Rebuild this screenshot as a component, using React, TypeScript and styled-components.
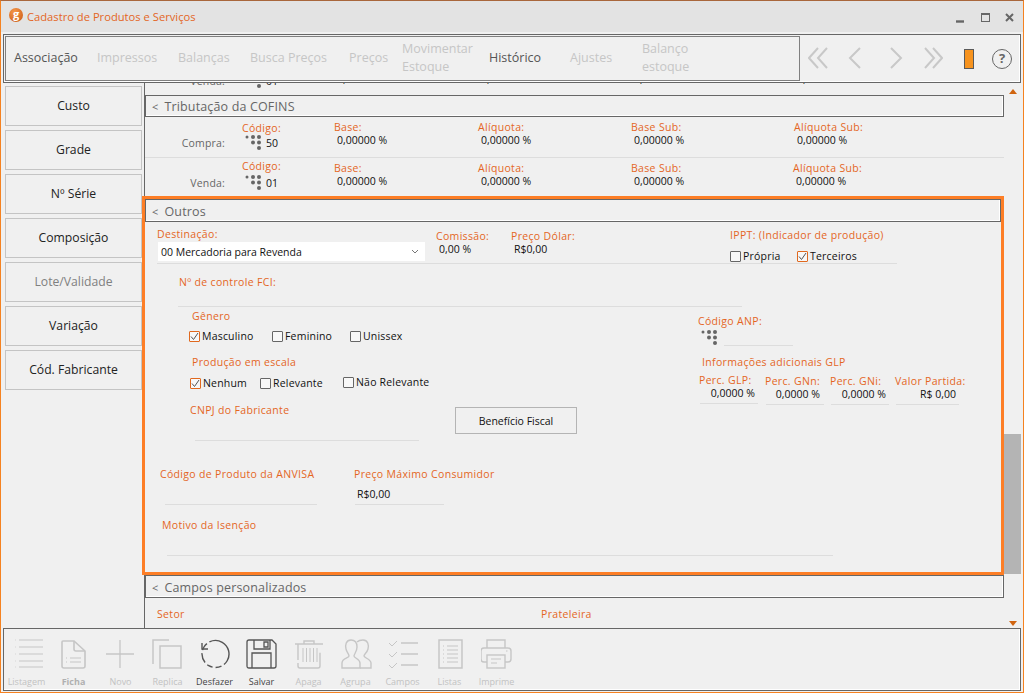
import styled, { createGlobalStyle } from 'styled-components'

const ORANGE = '#e4661f'
const FONT = '"Open Sans", "Noto Sans", sans-serif'

const GlobalStyle = createGlobalStyle`
  html, body {
    margin: 0;
    width: 1024px;
    height: 693px;
    overflow: hidden;
    background: #f0f0f0;
  }
`

const KeypadIcon = () => (
  <Keypad viewBox="0 0 16 15">
    <circle cx="2" cy="2" r="1.5" />
    <circle cx="8" cy="2" r="2" />
    <circle cx="14" cy="2" r="2" />
    <circle cx="8" cy="7.5" r="2" />
    <circle cx="14" cy="7.5" r="2" />
    <circle cx="14" cy="13" r="2" />
  </Keypad>
)

const CheckBox = ({ checked, label, x, lift }: { checked?: boolean; label: string; x: number; lift?: number }) => (
  <Check $x={x} $lift={lift || 0}>
    <CheckSquare $checked={checked}>
      {checked && (
        <svg width="9" height="9" viewBox="0 0 9 9">
          <path d="M1 4.5 L3.5 7.5 L8 1" fill="none" stroke="#555" strokeWidth="1" />
        </svg>
      )}
    </CheckSquare>
    {label}
  </Check>
)

const SectionHeader = ({ title, tall }: { title: string; tall?: boolean }) => (
  <Header $tall={tall}>
    <HeaderCaret>&lt;</HeaderCaret>
    {title}
  </Header>
)

const TaxRow = ({
  title,
  code,
  titleTop,
  codeTop,
  codeGap,
  subNudge,
  height,
  divider,
}: {
  title: string
  code: string
  titleTop: number
  codeTop: number
  codeGap: number
  subNudge: number
  height: number
  divider?: boolean
}) => (
  <TaxLine $height={height} $divider={divider}>
    <TaxTitle $top={titleTop}>{title}</TaxTitle>
    <TaxCell $width={92} $top={codeTop}>
      <Label>Código:</Label>
      <CodeValue $gap={codeGap}>
        <KeypadIcon />
        <Value>{code}</Value>
      </CodeValue>
    </TaxCell>
    <TaxCell $width={144} $top={3}>
      <Label>Base:</Label>
      <TaxValue>0,00000 %</TaxValue>
    </TaxCell>
    <TaxCell $width={153} $top={3}>
      <Label>Alíquota:</Label>
      <TaxValue>0,00000 %</TaxValue>
    </TaxCell>
    <TaxCell $width={163 + subNudge} $top={3}>
      <Label>Base Sub:</Label>
      <TaxValue>0,00000 %</TaxValue>
    </TaxCell>
    <TaxCell $width={120} $top={3}>
      <Label>Alíquota Sub:</Label>
      <TaxValue>0,00000 %</TaxValue>
    </TaxCell>
  </TaxLine>
)

const navTabs = [
  { label: 'Associação', width: 83, active: true },
  { label: 'Impressos', width: 81 },
  { label: 'Balanças', width: 72 },
  { label: 'Busca Preços', width: 99 },
  { label: 'Preços', width: 53 },
  { label: 'Movimentar Estoque', width: 87 },
  { label: 'Histórico', width: 81, active: true },
  { label: 'Ajustes', width: 72 },
  { label: 'Balanço estoque', width: 60 },
]

const sideButtons = [
  { label: 'Custo' },
  { label: 'Grade' },
  { label: 'Nº Série' },
  { label: 'Composição' },
  { label: 'Lote/Validade', muted: true },
  { label: 'Variação' },
  { label: 'Cód. Fabricante' },
]

const glpFields = [
  { label: 'Perc. GLP:', value: '0,0000 %', width: 66, lineWidth: 58, top: 0, right: 10 },
  { label: 'Perc. GNn:', value: '0,0000 %', width: 65, lineWidth: 58, top: 1, right: 10 },
  { label: 'Perc. GNi:', value: '0,0000 %', width: 65, lineWidth: 58, top: 1, right: 9 },
  { label: 'Valor Partida:', value: 'R$ 0,00', width: 66, lineWidth: 63, top: 1, right: 5 },
]

const DIM = '#c6c6c6'
const DARK = '#555'

const toolbarItems = [
  {
    label: 'Listagem',
    color: DIM,
    icon: (
      <>
        <path d="M8 2H32M8 9H32M8 16H32M8 23H32M8 29H32" />
        <path d="M4 2H4.6M4 9H4.6M4 16H4.6M4 23H4.6M4 29H4.6" />
      </>
    ),
  },
  {
    label: 'Ficha',
    strong: true,
    color: DIM,
    icon: (
      <>
        <path d="M4 4 Q4 3 5 3H16L27 13V28Q27 30 25 30H6Q4 30 4 28Z" strokeWidth="1.6" />
        <path d="M16 3V11Q16 13 18 13H27" strokeWidth="1.6" />
        <path d="M12 20H23M12 24H23M8 20H9M8 24H9" />
      </>
    ),
  },
  {
    label: 'Novo',
    color: DIM,
    icon: <path d="M15 2V30M1 16H29" strokeWidth="1.3" />,
  },
  {
    label: 'Replica',
    color: DIM,
    icon: (
      <>
        <path d="M1 26V2H17" strokeWidth="1.5" />
        <rect x="8" y="8" width="21" height="22" strokeWidth="1.5" />
      </>
    ),
  },
  {
    label: 'Desfazer',
    color: DARK,
    icon: (
      <>
        <circle cx="16.5" cy="16" r="13.5" strokeWidth="1.4" strokeDasharray="26 3 6 3 6 3 10 3 8 3" transform="rotate(-60 16.5 16)" />
        <path d="M3 5V11H9" strokeWidth="1.4" />
      </>
    ),
  },
  {
    label: 'Salvar',
    color: DARK,
    icon: (
      <>
        <path d="M3 2H26L30 6V28Q30 30 28 30H3Q1 30 1 28V4Q1 2 3 2Z" strokeWidth="1.3" />
        <path d="M6 30V15H25V30M8 2V11H24V2M18 4H22V9H18Z" strokeWidth="1.3" />
      </>
    ),
  },
  {
    label: 'Apaga',
    color: DIM,
    icon: (
      <>
        <path d="M2 6H30M11 6V3H21V6" strokeWidth="1.4" />
        <path d="M5 6V28Q5 30 7 30H25Q27 30 27 28V6" strokeWidth="1.4" strokeDasharray="16 3 40" />
        <path d="M10 10V24M13.5 10V24M17 10V24M20.5 10V24M24 10V24" />
      </>
    ),
  },
  {
    label: 'Agrupa',
    color: DIM,
    icon: (
      <>
        <path d="M11 2C6 2 5 7 6 11C7 15 9 16 9 18C9 20 2 20 2 25V30H20V25C20 21 14 20 14 18C14 16 17 14 17 9C17 5 15 2 11 2Z" strokeWidth="1.4" />
        <path d="M17 4C19 2 21 2 23 2C28 2 29 7 28 11C27 15 24 16 24 18C24 20 31 21 31 25V30H20" strokeWidth="1.4" />
      </>
    ),
  },
  {
    label: 'Campos',
    color: DIM,
    icon: (
      <>
        <path d="M2 5L5 8L10 3M2 16L5 19L10 14M2 27L5 30L10 25" />
        <path d="M14 5H31M14 16H31M14 27H31" strokeWidth="1.3" />
      </>
    ),
  },
  {
    label: 'Listas',
    color: DIM,
    icon: (
      <>
        <rect x="5" y="2" width="23" height="28" strokeWidth="1.5" />
        <path d="M13 8H24M13 12H24M13 16H24M13 20H24M13 24H24M9 8H10M9 12H10M9 16H10M9 20H10M9 24H10" />
      </>
    ),
  },
  {
    label: 'Imprime',
    color: DIM,
    icon: (
      <>
        <path d="M6 10V2H24V10" strokeWidth="1.4" />
        <path d="M6 24H3Q0 24 0 21V13Q0 10 3 10H27Q30 10 30 13V21Q30 24 27 24H24" strokeWidth="1.4" />
        <rect x="6" y="17" width="18" height="13" strokeWidth="1.4" />
        <path d="M10 21H20M10 25H16M25 13H26.5" />
      </>
    ),
  },
]

const App = () => (
  <Window>
    <GlobalStyle />
    <TitleBar>
      <Logo>g</Logo>
      <WindowTitle>Cadastro de Produtos e Serviços</WindowTitle>
      <WindowControls>
        <svg width="59" height="14" viewBox="0 0 59 14" fill="none" stroke="#666">
          <path d="M0 9.5H8" strokeWidth="2.4" />
          <rect x="25.5" y="1.5" width="8" height="8" />
          <path d="M25 2H34" strokeWidth="2" />
          <path d="M50 2L57 9M57 2L50 9" strokeWidth="2" />
        </svg>
      </WindowControls>
    </TitleBar>

    <NavBar>
      <NavTabs>
        {navTabs.map((tab) => (
          <NavTab key={tab.label} $width={tab.width} $active={tab.active}>
            {tab.label}
          </NavTab>
        ))}
      </NavTabs>
      <NavIcon $ml={8} width="20" height="22" viewBox="0 0 20 22">
        <path d="M10 1L1 11L10 21M19 1L10 11L19 21" />
      </NavIcon>
      <NavIcon $ml={20} width="14" height="22" viewBox="0 0 14 22">
        <path d="M12 1L2 11L12 21" />
      </NavIcon>
      <NavIcon $ml={27} width="14" height="22" viewBox="0 0 14 22">
        <path d="M2 1L12 11L2 21" />
      </NavIcon>
      <NavIcon $ml={21} width="19" height="22" viewBox="0 0 19 22">
        <path d="M1 1L10 11L1 21M9 1L18 11L9 21" />
      </NavIcon>
      <StatusBar />
      <HelpButton>?</HelpButton>
    </NavBar>

    <Body>
      <SideBar>
        {sideButtons.map((button) => (
          <SideButton key={button.label} $muted={button.muted}>
            {button.label}
          </SideButton>
        ))}
      </SideBar>

      <Main>
        <Scroll>
          <ClippedRow>
            <TaxLine $height={23}>
              <TaxTitle $top={2}>Venda:</TaxTitle>
              <TaxCell $width={92} $top={1}>
                <CodeValue $gap={0}>
                  <KeypadIcon />
                  <Value>01</Value>
                </CodeValue>
              </TaxCell>
              {[144, 153, 163, 120].map((width) => (
                <TaxCell key={width} $width={width} $top={1}>
                  <TaxValue>0,00000 %</TaxValue>
                </TaxCell>
              ))}
            </TaxLine>
          </ClippedRow>
          <SectionHeader title="Tributação da COFINS" />
          <TaxRow title="Compra:" code="50" titleTop={19} codeTop={4} codeGap={0} subNudge={0} height={41} divider />
          <TaxRow title="Venda:" code="01" titleTop={18} codeTop={1} codeGap={2} subNudge={-1} height={38} />

          <Highlight>
            <SectionHeader title="Outros" tall />
            <DestinationRow>
              <Field $width={279} $top={5}>
                <Label>Destinação:</Label>
                <Select>
                  00 Mercadoria para Revenda
                  <svg width="8" height="5" viewBox="0 0 8 5">
                    <path d="M1 1L4 4L7 1" fill="none" stroke="#777" />
                  </svg>
                </Select>
              </Field>
              <Field $width={75} $top={7}>
                <Label>Comissão:</Label>
                <TaxValue>0,00 %</TaxValue>
              </Field>
              <Field $width={219} $top={7}>
                <Label>Preço Dólar:</Label>
                <TaxValue>R$0,00</TaxValue>
              </Field>
              <Field $width={167} $top={6}>
                <Label>IPPT: (Indicador de produção)</Label>
                <ChecksRow $top={7}>
                  <CheckBox label="Própria" x={67} />
                  <CheckBox checked label="Terceiros" x={0} />
                </ChecksRow>
              </Field>
            </DestinationRow>

            <FciRow>
              <Label>Nº de controle FCI:</Label>
            </FciRow>

            <Columns>
              <LeftColumn>
                <GroupTitle $left={47} $top={2}>Gênero</GroupTitle>
                <ChecksRow $left={44} $top={6}>
                  <CheckBox checked label="Masculino" x={83} />
                  <CheckBox label="Feminino" x={78} />
                  <CheckBox label="Unissex" x={0} />
                </ChecksRow>
                <GroupTitle $left={47} $top={12}>Produção em escala</GroupTitle>
                <ChecksRow $left={45} $top={7}>
                  <CheckBox checked label="Nenhum" x={70} />
                  <CheckBox label="Relevante" x={83} />
                  <CheckBox label="Não Relevante" x={0} lift={1} />
                </ChecksRow>
                <FabricanteRow>
                  <Field $width={229} $top={13}>
                    <Label>CNPJ do Fabricante</Label>
                    <Underline $left={5} $width={224} $top={23} />
                  </Field>
                  <ActionButton>Benefício Fiscal</ActionButton>
                </FabricanteRow>
              </LeftColumn>

              <RightColumn>
                <Label>Código ANP:</Label>
                <AnpRow>
                  <KeypadIcon />
                  <Underline $left={7} $width={69} $top={0} />
                </AnpRow>
                <GroupTitle $left={4} $top={9}>Informações adicionais GLP</GroupTitle>
                <GlpRow>
                  {glpFields.map((field) => (
                    <GlpField key={field.label} $width={field.width} $top={field.top}>
                      <Label>{field.label}</Label>
                      <GlpValue $right={field.right}>{field.value}</GlpValue>
                      <Underline $left={1} $width={field.lineWidth} $top={3} />
                    </GlpField>
                  ))}
                </GlpRow>
              </RightColumn>
            </Columns>

            <AnvisaRow>
              <Field $width={157} $top={0}>
                <Label>Código de Produto da ANVISA</Label>
                <Underline $left={5} $width={152} $top={23} />
              </Field>
              <PriceField>
                <Label>Preço Máximo Consumidor</Label>
                <Value $inset={3} $top={6}>R$0,00</Value>
                <Underline $left={1} $width={89} $top={3} />
              </PriceField>
            </AnvisaRow>

            <MotivoField>
              <Label>Motivo da Isenção</Label>
              <Underline $left={5} $width={666} $top={23} />
            </MotivoField>
          </Highlight>

          <SectionHeader title="Campos personalizados" tall />
          <CustomRow>
            <CustomField $width={384}>Setor</CustomField>
            <CustomField $width={200}>Prateleira</CustomField>
          </CustomRow>
        </Scroll>

        <ScrollBar>
          <ScrollArrow viewBox="0 0 8 5" width="8" height="5">
            <path d="M4 0L8 5H0Z" />
          </ScrollArrow>
          <ScrollThumb />
          <ScrollArrow viewBox="0 0 8 5" width="8" height="5">
            <path d="M0 0H8L4 5Z" />
          </ScrollArrow>
        </ScrollBar>
      </Main>
    </Body>

    <Toolbar>
      {toolbarItems.map((item) => (
        <ToolItem key={item.label}>
          <svg width="32" height="32" viewBox="0 0 32 32" fill="none" stroke={item.color} strokeWidth="1">
            {item.icon}
          </svg>
          <ToolLabel $dark={item.color === DARK} $strong={item.strong}>
            {item.label}
          </ToolLabel>
        </ToolItem>
      ))}
    </Toolbar>
  </Window>
)

const Window = styled.div`
  width: 1024px;
  height: 693px;
  box-sizing: border-box;
  display: flex;
  flex-direction: column;
  background: #f0f0f0;
  border: 1px solid #f58220;
  border-top-color: #a9673c;
  font-family: ${FONT};
  overflow: hidden;
`

const TitleBar = styled.div`
  height: 31px;
  flex-shrink: 0;
  background: #e3e3e3;
  display: flex;
  align-items: center;
  padding: 0 8px;
`

const Logo = styled.span`
  width: 14px;
  height: 14px;
  margin-top: -4px;
  border-radius: 50%;
  background: radial-gradient(circle at 40% 30%, #f59a4c, #c9540f);
  color: #fff;
  font-size: 11px;
  font-weight: 700;
  line-height: 11px;
  text-align: center;
`

const WindowTitle = styled.span`
  margin-left: 4px;
  font-size: 11.2px;
  color: ${ORANGE};
`

const WindowControls = styled.div`
  margin-left: auto;
  height: 14px;
  margin-top: -2px;
`

const NavBar = styled.div`
  height: 49px;
  flex-shrink: 0;
  box-sizing: border-box;
  margin: 2px 2px 0;
  border: 1px solid #666;
  box-shadow: inset -1px -1px 0 #fff;
  padding: 1px;
  display: flex;
  align-items: center;
`

const NavTabs = styled.div`
  width: 795px;
  height: 45px;
  box-sizing: border-box;
  border: 1px solid #808080;
  padding: 0 0 1px 8px;
  display: flex;
  align-items: center;
`

const NavTab = styled.div<{ $width: number; $active?: boolean }>`
  width: ${(p) => p.$width}px;
  flex-shrink: 0;
  box-sizing: border-box;
  padding-right: 10px;
  font-size: 12.5px;
  line-height: 18px;
  color: ${(p) => (p.$active ? '#555' : '#c6c6c6')};
`

const NavIcon = styled.svg<{ $ml: number }>`
  margin: -2px 0 0 ${(p) => p.$ml}px;
  flex-shrink: 0;
  fill: none;
  stroke: #c8c8c8;
  stroke-width: 2;
`

const StatusBar = styled.div`
  width: 10px;
  height: 20px;
  box-sizing: border-box;
  margin-left: 21px;
  background: #f7931e;
  border: 1px solid #5a5a5a;
`

const HelpButton = styled.div`
  width: 20px;
  height: 20px;
  box-sizing: border-box;
  margin-left: 18px;
  border: 1.5px solid #666;
  border-radius: 50%;
  color: #666;
  font-size: 13px;
  font-weight: 700;
  line-height: 17px;
  text-align: center;
`

const Body = styled.div`
  flex: 1;
  min-height: 0;
  display: flex;
  margin: 0 2px;
`

const SideBar = styled.div`
  width: 139px;
  flex-shrink: 0;
  box-sizing: border-box;
  padding: 3px 0 0 2px;
  display: flex;
  flex-direction: column;
  gap: 4px;
`

const SideButton = styled.div<{ $muted?: boolean }>`
  height: 40px;
  box-sizing: border-box;
  border: 1px solid #c4c4c4;
  padding-bottom: 2px;
  display: flex;
  align-items: center;
  justify-content: center;
  font-size: 12.2px;
  color: ${(p) => (p.$muted ? '#808080' : '#222')};
`

const Main = styled.div`
  flex: 1;
  min-width: 0;
  display: flex;
  overflow: hidden;
`

const Scroll = styled.div`
  width: 860px;
  flex-shrink: 0;
  box-sizing: border-box;
  margin-left: 2px;
  border-left: 1px solid #666;
`

const ClippedRow = styled.div`
  margin-top: -11px;
`

const Header = styled.div<{ $tall?: boolean }>`
  height: ${(p) => (p.$tall ? 23 : 22)}px;
  box-sizing: border-box;
  border: 1px solid #666;
  box-shadow: inset -1px -1px 0 #fff;
  padding: ${(p) => (p.$tall ? 2 : 0)}px 0 0 6px;
  display: flex;
  align-items: center;
  font-size: 12.5px;
  letter-spacing: 0.15px;
  color: #666;
`

const HeaderCaret = styled.span`
  margin-right: 6px;
  font-size: 11px;
`

const TaxLine = styled.div<{ $height: number; $divider?: boolean }>`
  height: ${(p) => p.$height}px;
  box-sizing: border-box;
  display: flex;
  border-bottom: 1px solid ${(p) => (p.$divider ? '#ddd' : 'transparent')};
`

const TaxTitle = styled.div<{ $top: number }>`
  width: 80px;
  margin: ${(p) => p.$top}px 17px 0 0;
  text-align: right;
  font-size: 10.5px;
  line-height: 14px;
  letter-spacing: 0.2px;
  color: #666;
`

const TaxCell = styled.div<{ $width: number; $top: number }>`
  width: ${(p) => p.$width}px;
  flex-shrink: 0;
  padding-top: ${(p) => p.$top}px;
`

const Label = styled.div`
  font-size: 10.5px;
  line-height: 14px;
  letter-spacing: 0.33px;
  color: ${ORANGE};
  white-space: nowrap;
`

const Value = styled.div<{ $inset?: number; $top?: number }>`
  margin: ${(p) => p.$top || 0}px 0 0 ${(p) => p.$inset || 0}px;
  font-size: 10.5px;
  line-height: 14px;
  color: #111;
  white-space: nowrap;
`

const TaxValue = styled(Value)`
  margin-left: 3px;
  line-height: 12px;
`

const CodeValue = styled.div<{ $gap: number }>`
  margin: ${(p) => p.$gap}px 0 0 3px;
  display: flex;
  align-items: center;
  gap: 5px;
`

const Keypad = styled.svg`
  width: 16px;
  height: 15px;
  flex-shrink: 0;
  fill: #666;
`

const Highlight = styled.div`
  height: 379px;
  width: 862px;
  box-sizing: border-box;
  margin-left: -3px;
  border: 3px solid #fd7e26;
`

const Field = styled.div<{ $width: number; $top: number }>`
  width: ${(p) => p.$width}px;
  flex-shrink: 0;
  padding-top: ${(p) => p.$top}px;
`

const DestinationRow = styled.div`
  height: 42px;
  width: 740px;
  box-sizing: border-box;
  margin-left: 12px;
  border-bottom: 1px solid #ddd;
  display: flex;
`

const Select = styled.div`
  width: 267px;
  height: 19px;
  box-sizing: border-box;
  margin: 1px 0 0 1px;
  padding: 0 6px 0 3px;
  background: #fff;
  display: flex;
  align-items: center;
  justify-content: space-between;
  font-size: 10.5px;
  color: #111;
`

const FciRow = styled.div`
  height: 43px;
  width: 564px;
  box-sizing: border-box;
  margin-left: 33px;
  padding: 11px 0 0 1px;
  border-bottom: 1px solid #ddd;
`

const Columns = styled.div`
  display: flex;
`

const LeftColumn = styled.div`
  width: 553px;
  flex-shrink: 0;
`

const RightColumn = styled.div`
  padding-top: 7px;
`

const GroupTitle = styled(Label)<{ $left: number; $top: number }>`
  margin: ${(p) => p.$top}px 0 0 ${(p) => p.$left}px;
`

const ChecksRow = styled.div<{ $left?: number; $top: number }>`
  margin: ${(p) => p.$top}px 0 0 ${(p) => p.$left || 0}px;
  height: 14px;
  display: flex;
  align-items: center;
`

const Check = styled.div<{ $x: number; $lift: number }>`
  width: ${(p) => (p.$x ? `${p.$x}px` : 'auto')};
  flex-shrink: 0;
  margin-top: ${(p) => -p.$lift * 2}px;
  display: flex;
  align-items: center;
  gap: 2px;
  font-size: 10.5px;
  letter-spacing: 0.2px;
  color: #111;
  white-space: nowrap;
`

const CheckSquare = styled.span<{ $checked?: boolean }>`
  width: 11px;
  height: 11px;
  flex-shrink: 0;
  box-sizing: border-box;
  border: 1px solid ${(p) => (p.$checked ? '#e0691f' : '#666')};
  border-radius: 1px;
  background: #f8f8f8;
  display: flex;
  align-items: center;
  justify-content: center;
`

const FabricanteRow = styled.div`
  display: flex;
  margin: 0 0 0 45px;
`

const Underline = styled.div<{ $left: number; $width: number; $top: number }>`
  width: ${(p) => p.$width}px;
  height: 1px;
  margin: ${(p) => p.$top}px 0 0 ${(p) => p.$left}px;
  background: #ddd;
  flex-shrink: 0;
`

const ActionButton = styled.div`
  width: 122px;
  height: 27px;
  box-sizing: border-box;
  margin: 17px 0 0 36px;
  border: 1px solid #b4b4b4;
  display: flex;
  align-items: center;
  justify-content: center;
  font-size: 10.5px;
  color: #111;
`

const AnpRow = styled.div`
  height: 17px;
  margin: 1px 0 0 3px;
  display: flex;
  align-items: flex-end;

  svg {
    margin-bottom: 1px;
  }
`

const GlpRow = styled.div`
  display: flex;
  margin: 4px 0 0 1px;
`

const GlpField = styled.div<{ $width: number; $top: number }>`
  width: ${(p) => p.$width}px;
  flex-shrink: 0;
  padding-top: ${(p) => p.$top}px;
`

const GlpValue = styled(Value)<{ $right: number }>`
  padding-right: ${(p) => p.$right}px;
  text-align: right;
  line-height: 13px;
`

const AnvisaRow = styled.div`
  display: flex;
  margin: 26px 0 0 15px;
`

const PriceField = styled.div`
  margin-left: 37px;
`

const MotivoField = styled.div`
  margin: 13px 0 0 17px;
`

const CustomRow = styled.div`
  display: flex;
  padding: 9px 0 0 12px;
`

const CustomField = styled(Label)<{ $width: number }>`
  width: ${(p) => p.$width}px;
`

const ScrollBar = styled.div`
  width: 17px;
  flex-shrink: 0;
  display: flex;
  flex-direction: column;
  align-items: center;
`

const ScrollArrow = styled.svg`
  flex-shrink: 0;
  fill: #d0640f;
  margin: 6px 0;
`

const ScrollThumb = styled.div`
  width: 17px;
  height: 140px;
  flex-shrink: 0;
  margin: 334px 0 41px;
  background: #b4b4b4;
`

const Toolbar = styled.div`
  height: 63px;
  flex-shrink: 0;
  box-sizing: border-box;
  margin: 0 2px 1px;
  border: 1px solid #666;
  box-shadow: inset -1px -1px 0 #fff;
  display: flex;
  padding: 9px 0 0;

  > :first-child {
    margin-left: -1px;
  }
`

const ToolItem = styled.div`
  width: 47px;
  flex-shrink: 0;
  display: flex;
  flex-direction: column;
  align-items: center;
`

const ToolLabel = styled.span<{ $dark?: boolean; $strong?: boolean }>`
  margin-top: 6px;
  font-size: 9px;
  line-height: 12px;
  font-weight: ${(p) => (p.$strong ? 700 : 400)};
  color: ${(p) => (p.$dark ? '#444' : p.$strong ? '#b0b0b0' : '#c2c2c2')};
`

export default App
